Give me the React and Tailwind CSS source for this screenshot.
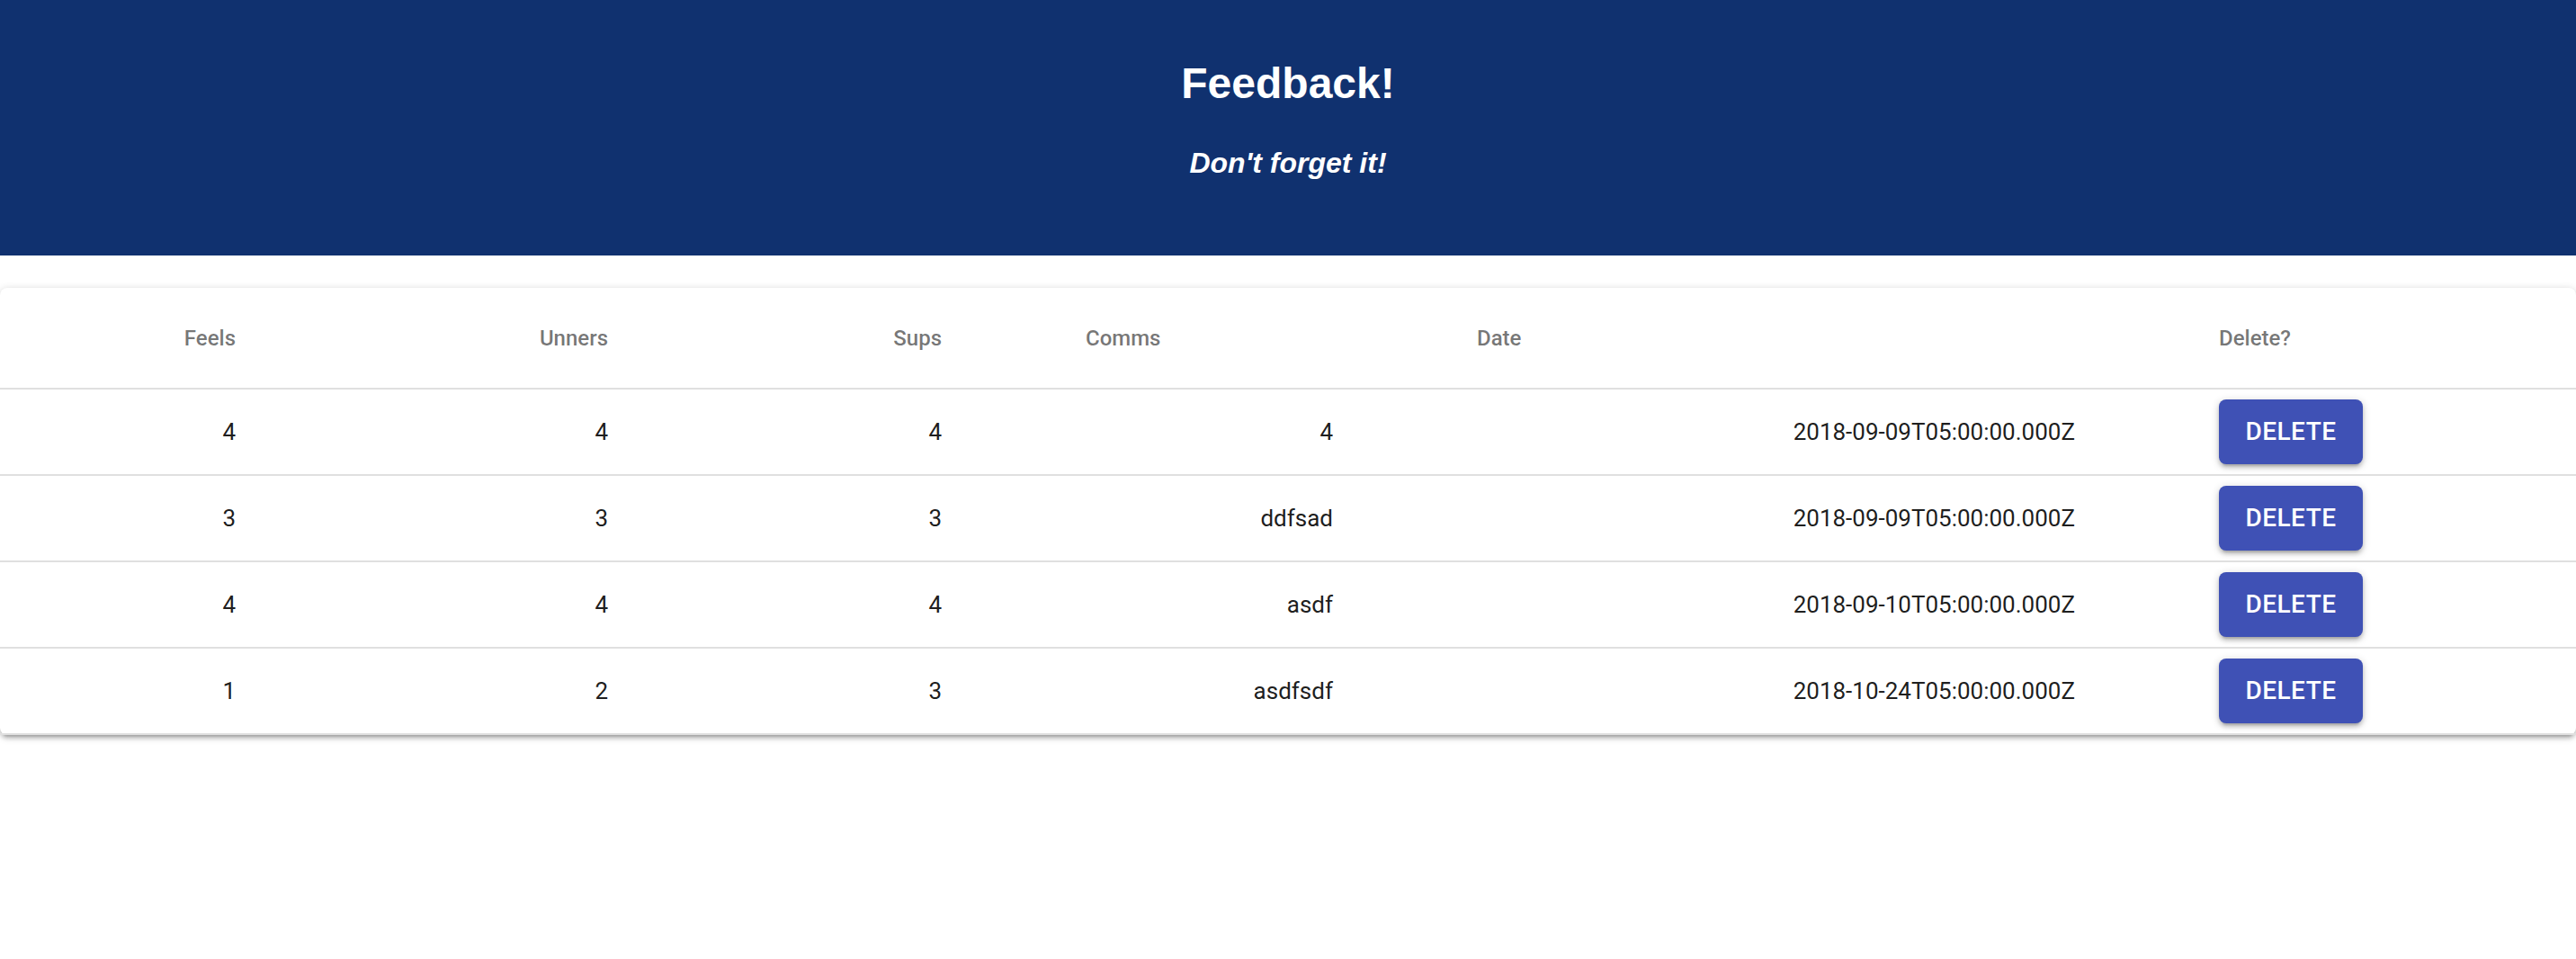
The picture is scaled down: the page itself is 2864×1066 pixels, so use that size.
const ROWS = [
  { feels: 4, unners: 4, sups: 4, comms: '4', date: '2018-09-09T05:00:00.000Z' },
  { feels: 3, unners: 3, sups: 3, comms: 'ddfsad', date: '2018-09-09T05:00:00.000Z' },
  { feels: 4, unners: 4, sups: 4, comms: 'asdf', date: '2018-09-10T05:00:00.000Z' },
  { feels: 1, unners: 2, sups: 3, comms: 'asdfsdf', date: '2018-10-24T05:00:00.000Z' },
];

const GRID = 'grid grid-cols-[374px_414px_371px_435px_825px_445px] items-center border-b-2 border-[#e0e0e0]';
const CELL = 'pl-[48px] pr-[112px]';

export default function App() {
  return (
    <div className="min-h-[1066px] bg-white">
      {/* Banner */}
      <header className="h-[284px] bg-[#10316f] flex flex-col items-center text-white font-['Liberation_Sans',Arial,sans-serif]">
        <h1 className="pt-[66px] text-[48px] leading-[54px] font-bold">Feedback!</h1>
        <h2 className="mt-[43px] text-[32px] leading-[36px] font-bold italic">Don't forget it!</h2>
      </header>

      {/* Table */}
      <div className="mt-[36px] w-full bg-white rounded-[8px] shadow-[0_2px_10px_0_rgba(0,0,0,0.2),0_4px_4px_0_rgba(0,0,0,0.14),0_6px_2px_-4px_rgba(0,0,0,0.12)] font-['Roboto',sans-serif]">
        <div className={`${GRID} h-[113px] text-[24px] font-medium text-black/55`}>
          <div className={`${CELL} text-right`}>Feels</div>
          <div className={`${CELL} text-right`}>Unners</div>
          <div className={`${CELL} text-right`}>Sups</div>
          <div className={CELL}>Comms</div>
          <div className={CELL}>Date</div>
          <div className="pl-[48px] pr-[48px]">Delete?</div>
        </div>

        {ROWS.map((r, i) => (
          <div key={i} className={`${GRID} h-[96px] text-[26px] text-black/90`}>
            <div className={`${CELL} text-right`}>{r.feels}</div>
            <div className={`${CELL} text-right`}>{r.unners}</div>
            <div className={`${CELL} text-right`}>{r.sups}</div>
            <div className={`${CELL} text-right`}>{r.comms}</div>
            <div className={`${CELL} text-right`}>{r.date}</div>
            <div className="pl-[48px] pr-[48px]">
              <button className="w-[160px] h-[72px] rounded-[8px] bg-[#3f51b5] text-white text-[28px] font-medium uppercase tracking-[0.5px] shadow-[0_2px_10px_0_rgba(0,0,0,0.2),0_4px_4px_0_rgba(0,0,0,0.14),0_6px_2px_-4px_rgba(0,0,0,0.12)]">
                Delete
              </button>
            </div>
          </div>
        ))}
      </div>
    </div>
  );
}
